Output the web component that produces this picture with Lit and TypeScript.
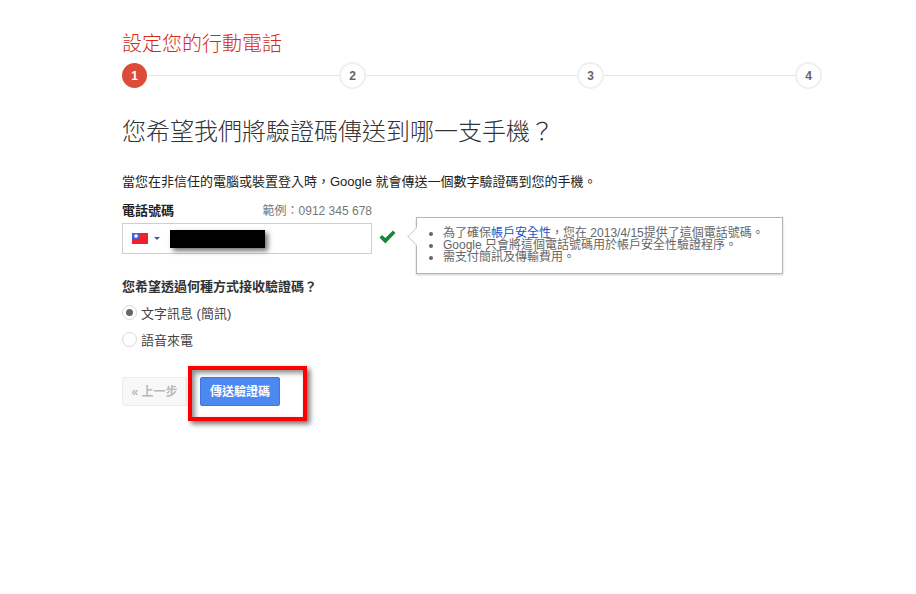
import { LitElement, html, css } from "lit";
import { customElement } from "lit/decorators.js";

@customElement("app-root")
export class AppRoot extends LitElement {
  static styles = css`
    :host {
      display: block;
      width: 916px;
      height: 594px;
      background: #fff;
      overflow: hidden;
      font-family: "Liberation Sans", "Noto Sans CJK TC", sans-serif;
      color: #333;
      font-size: 12px;
    }
    .page {
      padding: 31px 0 0 122px;
      width: 700px;
    }
    .title {
      font-size: 20px;
      line-height: 26px;
      color: #d62a14;
      margin: 0 0 5px;
      font-weight: 300;
    }
    .steps {
      display: flex;
      align-items: center;
      height: 27px;
    }
    .step {
      box-sizing: border-box;
      width: 27px;
      height: 27px;
      border: 2px solid #efefef;
      border-radius: 50%;
      display: flex;
      align-items: center;
      justify-content: center;
      font-size: 12px;
      font-weight: 700;
      color: #666;
      background: #fff;
      flex: none;
    }
    .step.on {
      width: 25px;
      height: 25px;
      border: none;
      background: #dd4b39;
      color: #fff;
    }
    .line {
      height: 1px;
      background: #e6e6e6;
    }
    h2 {
      font-size: 24px;
      line-height: 32px;
      font-weight: 300;
      color: #333;
      margin: 27px 0 0;
    }
    .intro {
      margin: 25px 0 0;
      font-size: 13px;
      line-height: 18px;
      color: #222;
      white-space: nowrap;
    }
    .phone-head {
      display: flex;
      justify-content: space-between;
      width: 250px;
      margin-top: 11px;
      line-height: 18px;
    }
    .phone-head b {
      color: #222;
      font-size: 13px;
    }
    .phone-head span {
      color: #777;
    }
    .phone-row {
      display: flex;
      align-items: flex-start;
      height: 57px;
      margin-top: -3px;
    }
    .input {
      box-sizing: border-box;
      width: 250px;
      height: 31px;
      margin-top: 6px;
      border: 1px solid #d0d0d0;
      display: flex;
      align-items: center;
      padding-left: 9px;
      flex: none;
    }
    .flag {
      display: block;
      flex: none;
    }
    .caret {
      width: 0;
      height: 0;
      border: 3px solid transparent;
      border-top: 3px solid #3a5ca8;
      border-bottom: none;
      margin-left: 6px;
      flex: none;
    }
    .redact {
      width: 95px;
      height: 18px;
      background: #000;
      margin-left: 10px;
      box-shadow: 3px 3px 5px rgba(0, 0, 0, 0.55);
    }
    .check {
      margin: 13px 0 0 7px;
      display: block;
      flex: none;
    }
    .tip {
      position: relative;
      box-sizing: border-box;
      width: 367px;
      height: 57px;
      margin-left: 20px;
      border: 1px solid #b5b5b5;
      box-shadow: 0 1px 2px rgba(0, 0, 0, 0.2);
      background: #fff;
      color: #666;
      padding: 9px 0 0 26px;
    }
    .tip::before {
      content: "";
      position: absolute;
      left: -7px;
      top: 12px;
      width: 12px;
      height: 12px;
      background: #fff;
      border-left: 1px solid #d5d5d5;
      border-bottom: 1px solid #d5d5d5;
      transform: rotate(45deg);
    }
    ul {
      margin: 0;
      padding: 0;
      list-style: disc;
      line-height: 12px;
      white-space: nowrap;
      position: relative;
    }
    a {
      color: #15c;
      text-decoration: none;
    }
    .question {
      margin: 4px 0 0;
      font-size: 13px;
      font-weight: 700;
      line-height: 18px;
      color: #333;
    }
    .radio {
      display: flex;
      align-items: center;
      gap: 4px;
      height: 27px;
      font-size: 13px;
      color: #444;
    }
    .radios {
      margin-top: 3px;
    }
    .dot {
      box-sizing: border-box;
      width: 15px;
      height: 15px;
      border-radius: 50%;
      border: 1px solid #d8d8d8;
      background: #fff;
      display: flex;
      align-items: center;
      justify-content: center;
      flex: none;
    }
    .dot i {
      width: 7px;
      height: 7px;
      border-radius: 50%;
      background: #666;
    }
    .actions {
      display: flex;
      margin-top: 24px;
      gap: 13px;
    }
    button {
      font: inherit;
      box-sizing: border-box;
      height: 29px;
      border-radius: 2px;
      font-weight: 700;
      padding: 0 0 2px;
    }
    .back {
      width: 65px;
      background: #f8f8f8;
      border: 1px solid #ececec;
      color: #b8b8b8;
    }
    .send-wrap {
      position: relative;
    }
    .send {
      width: 80px;
      background: #4d87f0;
      border: 1px solid #3f78e0;
      color: #fff;
    }
    .mark {
      position: absolute;
      left: -12px;
      top: -11px;
      width: 119px;
      height: 55px;
      box-sizing: border-box;
      border: 4px solid #f00;
      box-shadow: 3px 3px 5px rgba(0, 0, 0, 0.55), inset 3px 3px 5px rgba(0, 0, 0, 0.45);
    }
  `;

  render() {
    return html`
      <div class="page">
        <h1 class="title">設定您的行動電話</h1>
        <div class="steps">
          <div class="step on">1</div>
          <div class="line" style="width:192px"></div>
          <div class="step">2</div>
          <div class="line" style="width:211px"></div>
          <div class="step">3</div>
          <div class="line" style="width:191px"></div>
          <div class="step">4</div>
        </div>
        <h2>您希望我們將驗證碼傳送到哪一支手機？</h2>
        <p class="intro">當您在非信任的電腦或裝置登入時，Google 就會傳送一個數字驗證碼到您的手機。</p>
        <div class="phone-head"><b>電話號碼</b><span>範例：0912 345 678</span></div>
        <div class="phone-row">
          <div class="input">
            <svg class="flag" width="16" height="11" viewBox="0 0 16 11">
              <rect width="16" height="11" fill="#f0202a" />
              <rect width="8" height="6" fill="#4a5fd0" />
              <circle cx="4" cy="3" r="1.8" fill="#fff" />
            </svg>
            <span class="caret"></span>
            <span class="redact"></span>
          </div>
          <svg class="check" width="17" height="14" viewBox="0 0 17 14">
            <path d="M0.5 7.5 L3 5 L6.3 8 L14 0.5 L16.5 3 L6.3 13.5 Z" fill="#0f8a3c" />
          </svg>
          <div class="tip">
            <ul>
              <li>為了確保<a>帳戶安全性</a>，您在 2013/4/15提供了這個電話號碼。</li>
              <li>Google 只會將這個電話號碼用於帳戶安全性驗證程序。</li>
              <li>需支付簡訊及傳輸費用。</li>
            </ul>
          </div>
        </div>
        <p class="question">您希望透過何種方式接收驗證碼？</p>
        <div class="radios">
          <div class="radio"><span class="dot"><i></i></span>文字訊息 (簡訊)</div>
          <div class="radio"><span class="dot"></span>語音來電</div>
        </div>
        <div class="actions">
          <button class="back">« 上一步</button>
          <div class="send-wrap">
            <button class="send">傳送驗證碼</button>
            <div class="mark"></div>
          </div>
        </div>
      </div>
    `;
  }
}
